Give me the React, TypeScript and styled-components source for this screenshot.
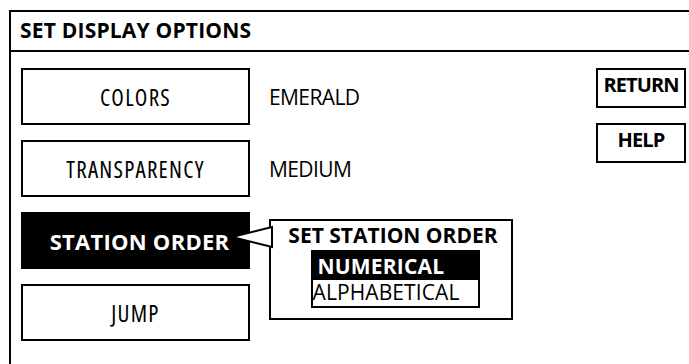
import React from "react";
import styled, { createGlobalStyle } from "styled-components";

const Global = createGlobalStyle`
  html, body {
    margin: 0;
    padding: 0;
    background: #fff;
    overflow: hidden;
  }
  body {
    font-family: "Open Sans", "Noto Sans", "Liberation Sans", sans-serif;
    font-stretch: 100%;
    color: #000;
  }
`;

const Frame = styled.div`
  margin: 10px 0 0 9px;
  width: 720px;
  height: 420px;
  border: 2px solid #000;
  box-sizing: border-box;
`;

const Header = styled.div`
  height: 40px;
  box-sizing: border-box;
  border-bottom: 2px solid #000;
  padding-left: 9px;
  font-weight: 700;
  font-size: 21px;
  letter-spacing: 0.2px;
  line-height: 36px;
  white-space: nowrap;
`;

const Content = styled.div`
  display: grid;
  grid-template-columns: 575px 90px;
  padding: 16px 0 0 10px;
`;

const Rows = styled.div`
  display: flex;
  flex-direction: column;
  gap: 15px;
`;

const Row = styled.div`
  position: relative;
  display: flex;
  align-items: center;
  gap: 19px;
`;

const OptionButton = styled.div<{ $active?: boolean }>`
  width: 229px;
  height: 57px;
  box-sizing: border-box;
  border: 2px solid #000;
  padding-left: ${(p) => (p.$active ? 8 : 0)}px;
  background: ${(p) => (p.$active ? "#000" : "#fff")};
  color: ${(p) => (p.$active ? "#fff" : "#000")};
  font-weight: ${(p) => (p.$active ? 700 : 400)};
  font-size: ${(p) => (p.$active ? 22 : 23)}px;
  font-stretch: ${(p) => (p.$active ? 100 : 75)}%;
  letter-spacing: ${(p) => (p.$active ? 0.25 : 1.25)}px;
  display: flex;
  align-items: center;
  justify-content: center;
  white-space: nowrap;
`;

const Value = styled.span`
  font-size: 21px;
  letter-spacing: -0.6px;
  white-space: nowrap;
`;

const Side = styled.div`
  display: flex;
  flex-direction: column;
  gap: 15px;
`;

const SideButton = styled.div`
  height: 40px;
  box-sizing: border-box;
  border: 2px solid #000;
  font-weight: 700;
  font-size: 20px;
  letter-spacing: -0.9px;
  line-height: 30px;
  text-align: center;
  white-space: nowrap;
`;

const Popup = styled.div`
  position: absolute;
  left: 248px;
  top: 7px;
  width: 244px;
  height: 101px;
  box-sizing: border-box;
  border: 2px solid #000;
  background: #fff;
  display: flex;
  flex-direction: column;
  align-items: center;
`;

const Pointer = styled.svg`
  position: absolute;
  left: -40px;
  top: 4px;
  overflow: visible;
`;

const PopupTitle = styled.div`
  font-weight: 700;
  font-size: 21px;
  line-height: 28px;
  white-space: nowrap;
  padding-left: 4px;
`;

const List = styled.div`
  margin-top: 1px;
  margin-left: 8px;
  width: 169px;
  box-sizing: border-box;
  border: 2px solid #000;
  display: flex;
  flex-direction: column;
`;

const ListItem = styled.div<{ $selected?: boolean }>`
  height: ${(p) => (p.$selected ? 28 : 26)}px;
  line-height: ${(p) => (p.$selected ? 28 : 24)}px;
  padding-left: ${(p) => (p.$selected ? 5 : 0)}px;
  background: ${(p) => (p.$selected ? "#000" : "#fff")};
  color: ${(p) => (p.$selected ? "#fff" : "#000")};
  font-weight: ${(p) => (p.$selected ? 700 : 400)};
  font-size: 21px;
  letter-spacing: ${(p) => (p.$selected ? 0.2 : 0.1)}px;
  white-space: nowrap;
`;

export default function App() {
  return (
    <>
      <Global />
      <Frame>
        <Header>SET DISPLAY OPTIONS</Header>
        <Content>
          <Rows>
            <Row>
              <OptionButton>COLORS</OptionButton>
              <Value>EMERALD</Value>
            </Row>
            <Row>
              <OptionButton>TRANSPARENCY</OptionButton>
              <Value>MEDIUM</Value>
            </Row>
            <Row>
              <OptionButton $active>STATION ORDER</OptionButton>
              <Popup>
                <Pointer width="41" height="24" viewBox="0 0 41 24">
                  <polygon points="1,12 41,2 41,22" fill="#fff" stroke="#000" strokeWidth="2" />
                </Pointer>
                <PopupTitle>SET STATION ORDER</PopupTitle>
                <List>
                  <ListItem $selected>NUMERICAL</ListItem>
                  <ListItem>ALPHABETICAL</ListItem>
                </List>
              </Popup>
            </Row>
            <Row>
              <OptionButton>JUMP</OptionButton>
            </Row>
          </Rows>
          <Side>
            <SideButton>RETURN</SideButton>
            <SideButton>HELP</SideButton>
          </Side>
        </Content>
      </Frame>
    </>
  );
}
